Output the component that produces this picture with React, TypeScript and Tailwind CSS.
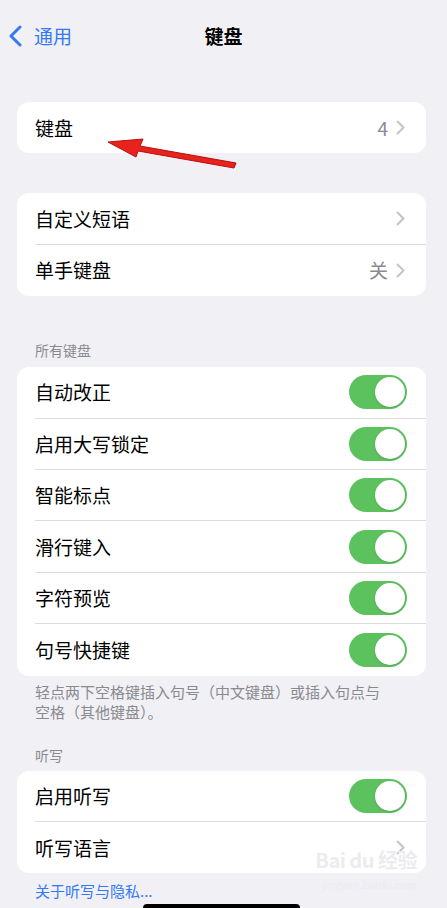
import React from 'react';

const font = { fontFamily: '"Noto Sans CJK SC", "Noto Sans", sans-serif' };

function Chevron() {
  return (
    <svg width="9" height="15" viewBox="0 0 9 15" fill="none" className="ml-2">
      <path d="M1.5 1.5L7.5 7.5L1.5 13.5" stroke="#c4c4c8" strokeWidth="2" strokeLinecap="round" strokeLinejoin="round" />
    </svg>
  );
}

function Toggle() {
  return (
    <div className="w-[58px] h-[34px] rounded-full bg-[#5cc25e] p-[2px] flex justify-end">
      <div className="w-[30px] h-[30px] rounded-full bg-white shadow" />
    </div>
  );
}

function Row({ label, value, toggle, last }: { label: string; value?: string; toggle?: boolean; last?: boolean }) {
  return (
    <div className="pl-[18px]">
      <div className={`h-[51.4px] flex items-center ${toggle ? 'pr-[19px]' : 'pr-[21px]'} ${last ? '' : 'border-b border-[#dcdce0]'}`}>
        <span className="flex-1 text-[19px] leading-[24px] text-black">{label}</span>
        {toggle ? (
          <Toggle />
        ) : (
          <>
            {value && <span className="text-[19px] leading-[24px] text-[#8a8a8e]">{value}</span>}
            <Chevron />
          </>
        )}
      </div>
    </div>
  );
}

export default function App() {
  const toggles = ['自动改正', '启用大写锁定', '智能标点', '滑行键入', '字符预览', '句号快捷键'];
  return (
    <div className="relative w-[447px] h-[908px] overflow-hidden bg-[#f0f0f5]" style={font}>
      {/* nav bar */}
      <div className="relative h-[75px] flex items-start justify-center pt-[23px]">
        <div className="absolute left-[9px] top-[23px] flex items-center gap-[12px]">
          <svg width="13" height="22" viewBox="0 0 13 22" fill="none">
            <path d="M11 2L2 11L11 20" stroke="#3478f6" strokeWidth="3" strokeLinecap="round" strokeLinejoin="round" />
          </svg>
          <span className="text-[19px] leading-[26px] text-[#3478f6]">通用</span>
        </div>
        <span className="text-[19px] leading-[26px] font-semibold text-black">键盘</span>
      </div>

      <div className="pl-[17px] pr-[21px] pt-[27px]">
        <div className="bg-white rounded-[12px]">
          <Row label="键盘" value="4" last />
        </div>

        <div className="bg-white rounded-[12px] mt-[40px]">
          <Row label="自定义短语" />
          <Row label="单手键盘" value="关" last />
        </div>

        <div className="mt-[44px] pl-[18px] text-[14px] text-[#8a8a8e] leading-[20px] mb-[7px]">所有键盘</div>
        <div className="bg-white rounded-[12px]">
          {toggles.map((t, i) => (
            <Row key={t} label={t} toggle last={i === toggles.length - 1} />
          ))}
        </div>
        <div className="pl-[18px] pr-[40px] pt-[6px] text-[15px] text-[#8a8a8e] leading-[20px]">
          轻点两下空格键插入句号（中文键盘）或插入句点与空格（其他键盘）。
        </div>

        <div className="mt-[23px] pl-[18px] text-[14px] text-[#8a8a8e] leading-[20px] mb-[6px]">听写</div>
        <div className="bg-white rounded-[12px]">
          <Row label="启用听写" toggle />
          <Row label="听写语言" last />
        </div>
        <div className="pl-[18px] pt-[8px] text-[15px] text-[#3478f6] leading-[20px]">关于听写与隐私...</div>
      </div>

      {/* home indicator */}
      <div className="absolute left-[143px] bottom-0 w-[157px] h-[4px] rounded-t-full bg-black" />

      {/* watermark */}
      <div className="absolute right-[30px] bottom-[38px] text-[20px] font-bold text-[#ececf0] tracking-tight leading-none">Bai du 经验</div>
      <div className="absolute right-[30px] bottom-[18px] text-[11px] text-[#ececf0] leading-none">jingyan.baidu.com</div>

      {/* red annotation arrow */}
      <svg className="absolute left-0 top-0" width="447" height="908" viewBox="0 0 447 908" fill="none">
        <path d="M236 163 L140 146 L143 139 L108 142 L136 157 L138 151 L234 168 Z" fill="#e8221c" stroke="#b8100c" strokeWidth="1" strokeLinejoin="round" />
      </svg>
    </div>
  );
}
